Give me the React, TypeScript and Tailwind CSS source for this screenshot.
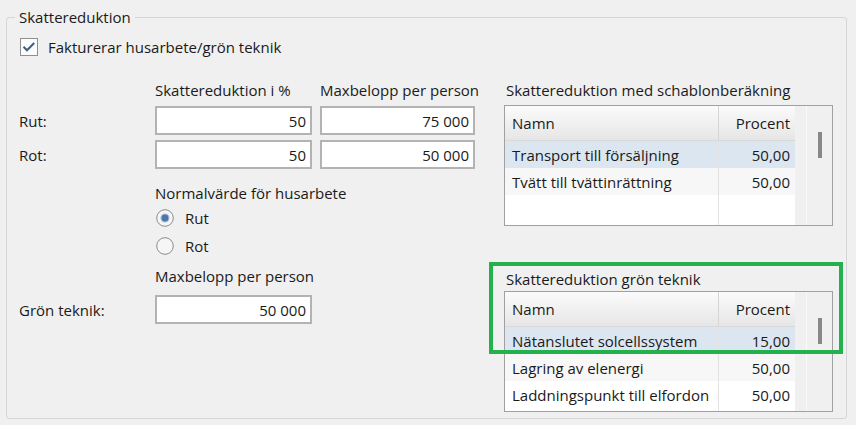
function CheckBox() {
  return (
    <svg width="18" height="18" viewBox="0 0 18 18" className="shrink-0">
      <rect x="0.5" y="0.5" width="17" height="17" fill="#fcfcfc" stroke="#8f8f8f" />
      <path d="M3.5 8.8 L7 12.3 L14.2 5" fill="none" stroke="#3d5f82" strokeWidth="2" />
    </svg>
  );
}

function Radio({ checked }: { checked?: boolean }) {
  return (
    <svg width="18" height="18" viewBox="0 0 18 18" className="shrink-0">
      <circle cx="9" cy="9" r="8.3" fill="#f6f6f6" stroke="#8c8c8c" />
      {checked && <circle cx="9" cy="9" r="4.6" fill="#a9c1dc" />}
      {checked && <circle cx="9" cy="9" r="3.4" fill="#4a78a8" />}
    </svg>
  );
}

function TextBox({ value, width }: { value: string; width: string }) {
  return (
    <div
      className={`${width} flex h-[29px] items-center justify-end border-2 border-[#b3b3b3] bg-white pr-[4px]`}
    >
      {value}
    </div>
  );
}

type Row = [string, string];

function ListView({ rows, thumbTop }: { rows: Row[]; thumbTop: string }) {
  const bgs = ["bg-[#dbe6f1]", "bg-[#f7f7f7]", "bg-white"];
  return (
    <div className="flex h-[121px] border border-[#a0a0a0] bg-white">
      <div className="flex w-[290px] flex-col">
        <div className="flex h-[35px] border-b border-[#d9d9d9] bg-gradient-to-b from-[#fbfbfb] to-[#e6e6e6]">
          <div className="flex w-[214px] items-center border-r border-[#d5d5d5] pl-[7px]">Namn</div>
          <div className="flex flex-1 items-center justify-end pr-[5px]">Procent</div>
        </div>
        {rows.map(([name, pct], i) => (
          <div key={name} className={`flex h-[27px] ${bgs[i]}`}>
            <div className="flex w-[214px] items-center whitespace-nowrap border-r border-[#e3e3e3] pl-[7px]">{name}</div>
            <div className="flex flex-1 items-center justify-end pr-[5px]">{pct}</div>
          </div>
        ))}
        <div className="flex flex-1">
          <div className="w-[214px] border-r border-[#e3e3e3]" />
        </div>
      </div>
      <div className="w-[12px] border-r border-[#fafafa] bg-[#f0f0f0]" />
      <div className={`w-[25px] bg-[#f0f0f0] pl-[11px] ${thumbTop}`}>
        <div className="h-[26px] w-[4px] bg-[#888888]" />
      </div>
    </div>
  );
}

export default function App() {
  return (
    <div className="h-[425px] w-[856px] overflow-hidden whitespace-nowrap bg-[#f0f0f0] pl-[6px] pt-[7px] font-['Open_Sans',sans-serif] text-[15px] leading-[20px] text-[#1a1a1a]">
      <fieldset className="h-[412px] w-[841px] rounded-[3px] border border-[#d5d5d5] pl-[12px] pr-[13px]">
        <legend className="ml-[-4px] px-[4px]">Skattereduktion</legend>

        <div className="mt-[10px] flex h-[20px] items-center gap-[10px] pl-[1px]">
          <CheckBox />
          <span>Fakturerar husarbete/grön teknik</span>
        </div>

        <div className="mt-[23px] flex">
          <div className="flex w-[485px] flex-col">
            <div className="grid grid-cols-[128px_157px_155px] gap-x-[8px]">
              <div />
              <div>Skattereduktion i %</div>
              <div>Maxbelopp per person</div>
            </div>
            <div className="mt-[6px] grid grid-cols-[128px_157px_155px] items-center gap-x-[8px] gap-y-[5px]">
              <div>Rut:</div>
              <TextBox value="50" width="w-[157px]" />
              <TextBox value="75 000" width="w-[155px]" />
              <div>Rot:</div>
              <TextBox value="50" width="w-[157px]" />
              <TextBox value="50 000" width="w-[155px]" />
            </div>

            <div className="ml-[136px] mt-[14px] flex flex-col">
              <div>Normalvärde för husarbete</div>
              <div className="mt-[4px] flex h-[21px] items-center gap-[11px] pl-[1px]">
                <Radio checked />
                <span>Rut</span>
              </div>
              <div className="mt-[7px] flex h-[21px] items-center gap-[11px] pl-[1px]">
                <Radio />
                <span>Rot</span>
              </div>
              <div className="mt-[10px]">Maxbelopp per person</div>
            </div>
            <div className="mt-[9px] grid grid-cols-[128px_157px] items-center gap-x-[8px]">
              <div>Grön teknik:</div>
              <TextBox value="50 000" width="w-[157px]" />
            </div>
          </div>

          <div className="flex w-[329px] flex-col">
            <div className="pl-[2px]">Skattereduktion med schablonberäkning</div>
            <div className="mt-[5px]">
              <ListView
                thumbTop="pt-[26px]"
                rows={[
                  ["Transport till försäljning", "50,00"],
                  ["Tvätt till tvättinrättning", "50,00"],
                ]}
              />
            </div>
            <div className="relative mt-[43px]">
              <div className="pl-[2px]">Skattereduktion grön teknik</div>
              <div className="mt-[2px]">
                <ListView
                  thumbTop="pt-[26px]"
                  rows={[
                    ["Nätanslutet solcellssystem", "15,00"],
                    ["Lagring av elenergi", "50,00"],
                    ["Laddningspunkt till elfordon", "50,00"],
                  ]}
                />
              </div>
              <div className="pointer-events-none absolute left-[-15px] top-[-7px] h-[92px] w-[354px] border-4 border-[#22b14c]" />
            </div>
          </div>
        </div>
      </fieldset>
    </div>
  );
}
